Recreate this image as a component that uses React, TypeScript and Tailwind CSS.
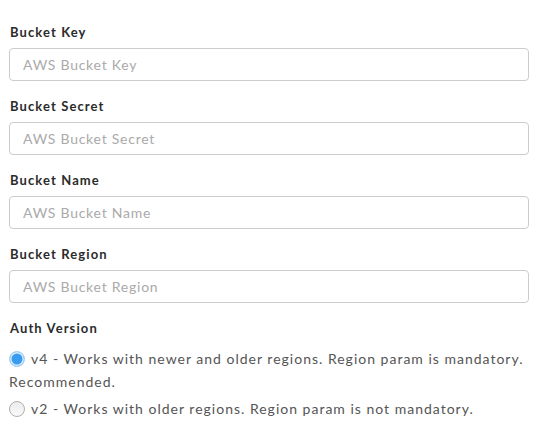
import { useState } from "react";

const fields = [
  { label: "Bucket Key", placeholder: "AWS Bucket Key" },
  { label: "Bucket Secret", placeholder: "AWS Bucket Secret" },
  { label: "Bucket Name", placeholder: "AWS Bucket Name" },
  { label: "Bucket Region", placeholder: "AWS Bucket Region" },
];

const radioCls =
  "appearance-none w-[16px] h-[16px] m-0 mr-[6px] align-[-3px] rounded-full border border-[#b0b0b0] bg-gradient-to-b from-[#ececec] to-[#fafafa] checked:border-[#a8d3f5] checked:bg-none checked:bg-[#3a9cee] checked:shadow-[inset_0_0_0_1.5px_#dcecfa]";

export default function App() {
  const [version, setVersion] = useState("v4");

  return (
    <div
      className="bg-white min-h-screen pl-[9px] pr-[11px] pt-[22px] text-[#333]"
      style={{ fontFamily: "Lato, 'Open Sans', sans-serif" }}
    >
      {fields.map((f) => (
        <div key={f.label} className="mb-[15px]">
          <label className="block h-[20px] leading-[20px] text-[13px] font-bold tracking-[1.1px] pl-[1px] mb-[6px] text-[#2b2b2b]">
            {f.label}
          </label>
          <input
            type="text"
            placeholder={f.placeholder}
            className="block w-full h-[33px] border border-[#ccc] rounded-[4px] px-[13px] text-[14px] tracking-[0.75px] text-[#555] placeholder:text-[#aaa] focus:outline-none"
          />
        </div>
      ))}

      <div>
        <label className="block h-[20px] leading-[20px] text-[13px] font-bold tracking-[1.1px] pl-[1px] mb-[9px] text-[#2b2b2b]">
          Auth Version
        </label>
        <label className="block text-[14px] leading-[23px] tracking-[1px] text-[#555]">
          <input
            type="radio"
            name="auth"
            checked={version === "v4"}
            onChange={() => setVersion("v4")}
            className={radioCls}
          />
          v4 - Works with newer and older regions. Region param is mandatory.
          Recommended.
        </label>
        <label className="block mt-[4px] text-[14px] leading-[23px] tracking-[1px] text-[#555]">
          <input
            type="radio"
            name="auth"
            checked={version === "v2"}
            onChange={() => setVersion("v2")}
            className={radioCls}
          />
          v2 - Works with older regions. Region param is not mandatory.
        </label>
      </div>
    </div>
  );
}
